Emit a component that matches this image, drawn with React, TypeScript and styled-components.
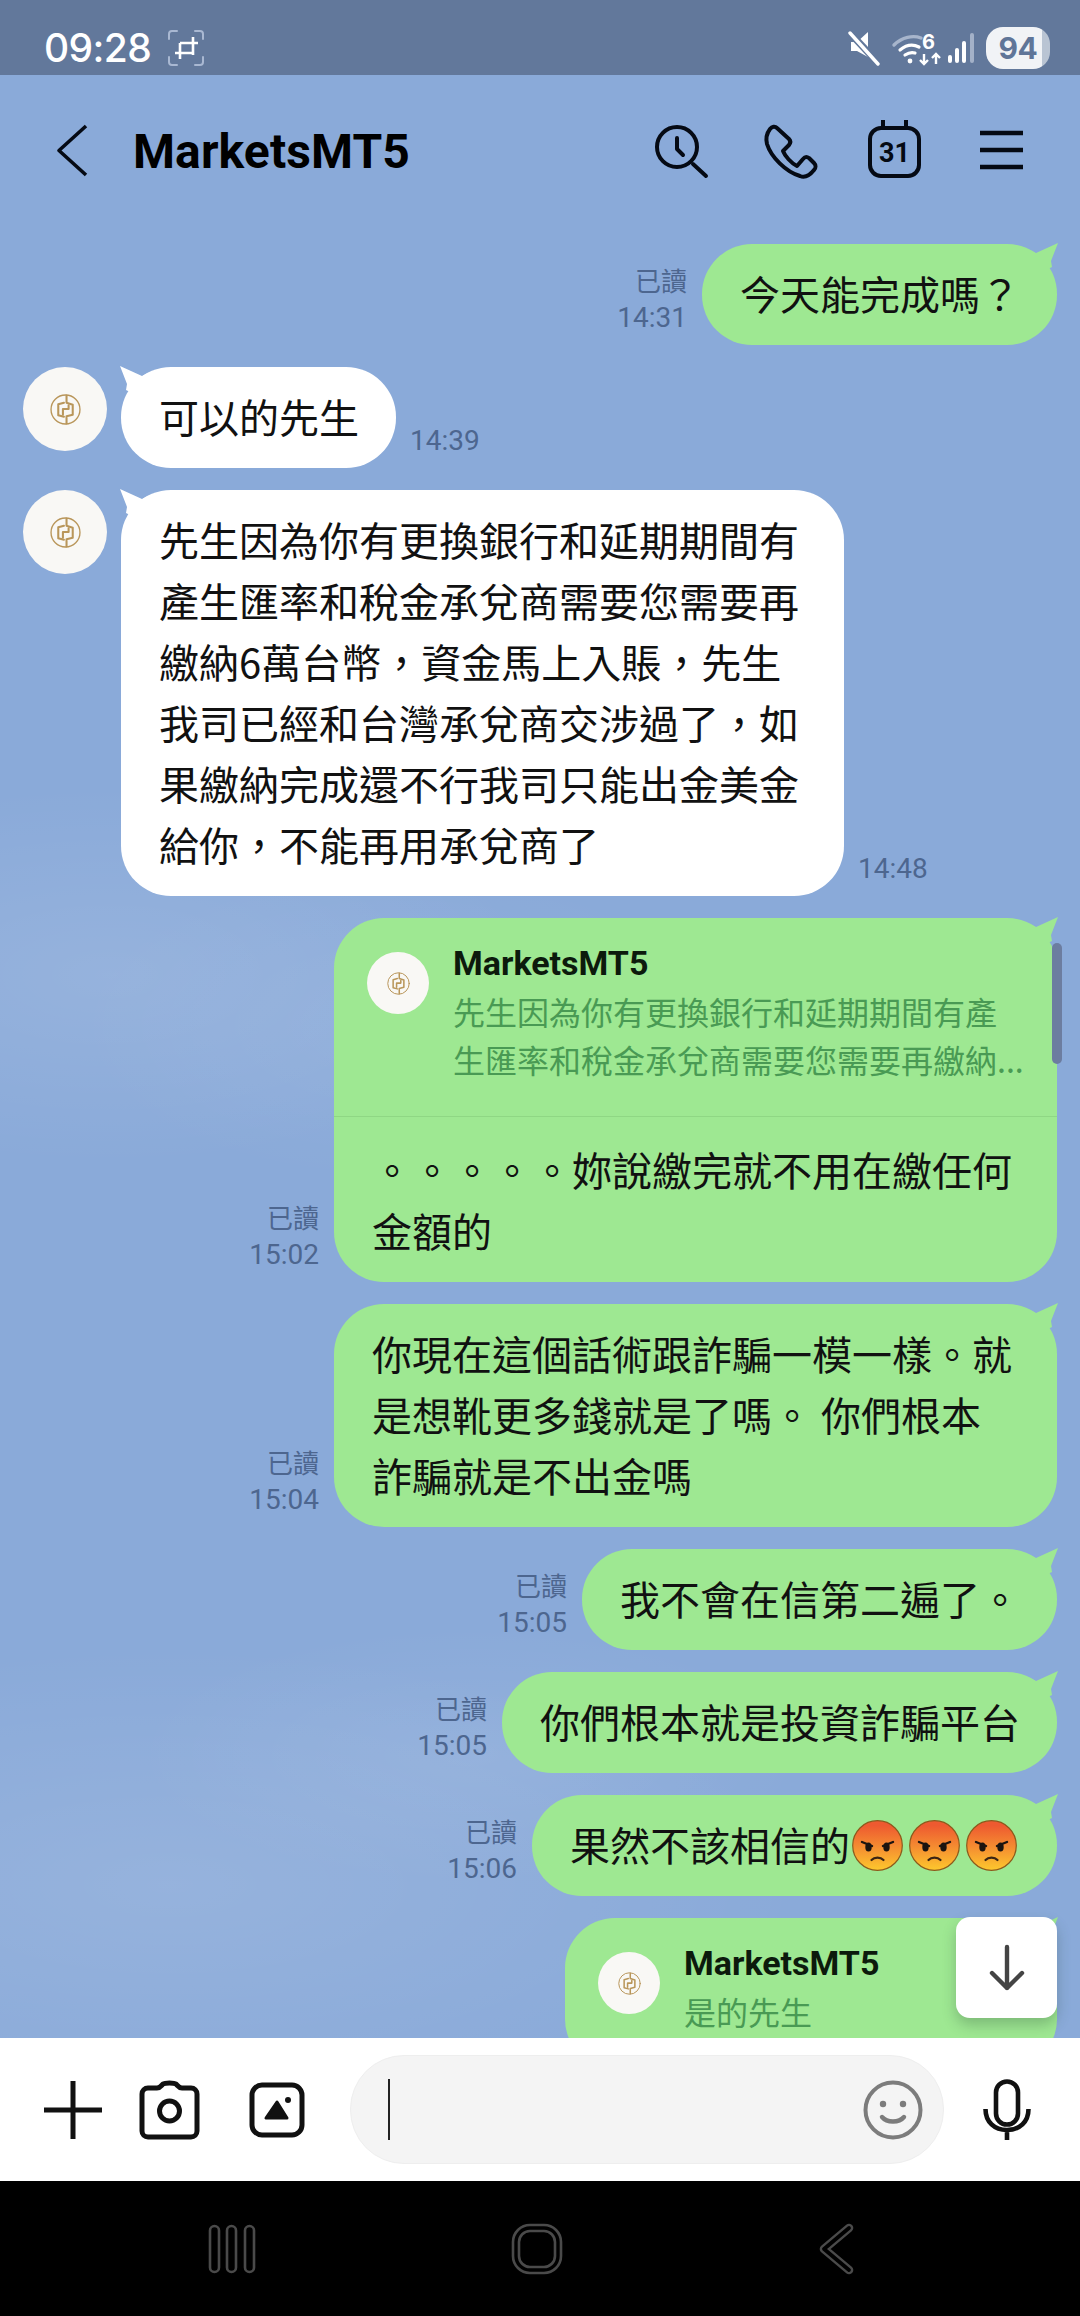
import React from "react";
import styled, { createGlobalStyle } from "styled-components";

const Global = createGlobalStyle`
  html, body { margin: 0; padding: 0; background: #000; }
  * { box-sizing: border-box; }
`;

const cjk = `"Noto Sans CJK TC", "Noto Sans CJK SC", "Noto Sans", sans-serif`;

const Screen = styled.div`
  width: 1080px;
  height: 2316px;
  display: flex;
  flex-direction: column;
  overflow: hidden;
  font-family: Roboto, ${cjk};
  color: #0f0f0f;
`;

const StatusBar = styled.div`
  height: 75px;
  flex: none;
  background: #62789b;
  display: flex;
  align-items: center;
  padding: 20px 30px 0 44px;
  color: #fff;
`;
const Clock = styled.span`
  font-family: Inter, Roboto, sans-serif;
  font-size: 39px;
  font-weight: 500;
  line-height: 1;
  letter-spacing: -0.6px;
`;
const CropMark = styled.svg`
  margin-left: 17px;
  flex: none;
`;
const StatusRight = styled.div`
  margin-left: auto;
  display: flex;
  align-items: center;
`;
const Battery = styled.div`
  width: 64px;
  height: 42px;
  margin-left: 11px;
  border-radius: 17px;
  background: linear-gradient(90deg, #f1f3f6 0 88%, #b9c4d3 88% 100%);
  color: #5f7598;
  font-family: Inter, Roboto, sans-serif;
  font-size: 30px;
  font-weight: 700;
  letter-spacing: -0.5px;
  display: flex;
  align-items: center;
  justify-content: center;
`;

const Main = styled.div`
  position: relative;
  flex: none;
  height: 1963px;
  overflow: hidden;
  display: flex;
  flex-direction: column;
  background-color: #8aaad9;
  background-image:
    radial-gradient(ellipse 430px 190px at 110px 900px, rgba(255,255,255,.10), rgba(255,255,255,0)),
    radial-gradient(ellipse 330px 160px at 400px 950px, rgba(255,255,255,.06), rgba(255,255,255,0)),
    radial-gradient(ellipse 640px 240px at 170px 1810px, rgba(255,255,255,.10), rgba(255,255,255,0)),
    radial-gradient(ellipse 340px 130px at 470px 1680px, rgba(255,255,255,.07), rgba(255,255,255,0));
`;

const Header = styled.header`
  height: 150px;
  flex: none;
  display: flex;
  align-items: center;
  padding: 0 46px 0 56px;
  color: #050a14;
`;
const Title = styled.h1`
  margin: 2px 0 0 45px;
  font-family: Roboto, sans-serif;
  font-size: 48px;
  font-weight: 700;
  letter-spacing: 0.1px;
  color: #000;
`;
const HeaderActions = styled.div`
  margin-left: auto;
  display: flex;
  gap: 43px;
`;
const Glyph = styled.svg`
  display: block;
  flex: none;
  fill: none;
  stroke: currentColor;
  stroke-linecap: round;
  stroke-linejoin: round;
`;
const CalendarDay = styled.text`
  font-family: Roboto, sans-serif;
  font-size: 27px;
  font-weight: 700;
  fill: #050a14;
  stroke: none;
  text-anchor: middle;
`;

const List = styled.div`
  display: flex;
  flex-direction: column;
  gap: 22px;
  padding: 19px 23px 0;
`;
const Row = styled.div<{ $out?: boolean }>`
  flex: none;
  display: flex;
  align-items: flex-end;
  justify-content: ${(p) => (p.$out ? "flex-end" : "flex-start")};
  gap: ${(p) => (p.$out ? 15 : 14)}px;
`;
const Meta = styled.div<{ $out?: boolean }>`
  display: flex;
  flex-direction: column;
  align-items: ${(p) => (p.$out ? "flex-end" : "flex-start")};
  padding-bottom: 9px;
  font-family: Roboto, sans-serif;
  font-size: 28px;
  line-height: 37px;
  color: #4d668f;
`;
const ReadLabel = styled.span`
  font-family: ${cjk};
  font-size: 26px;
  margin-bottom: 1px;
`;
const Avatar = styled.div<{ $size: number }>`
  width: ${(p) => p.$size}px;
  height: ${(p) => p.$size}px;
  flex: none;
  align-self: flex-start;
  border-radius: 50%;
  background: #f9f8f5;
  display: flex;
  align-items: center;
  justify-content: center;
`;
const Bubble = styled.div<{ $out?: boolean; $width?: number }>`
  position: relative;
  flex: none;
  width: ${(p) => (p.$width ? `${p.$width}px` : "auto")};
  border-radius: 50px;
  background: ${(p) => (p.$out ? "#9ee892" : "#ffffff")};
  &::before {
    content: "";
    position: absolute;
    top: -2px;
    ${(p) => (p.$out ? "right: -1px;" : "left: -1px;")}
    width: 36px;
    height: 40px;
    background: inherit;
    transform: ${(p) => (p.$out ? "none" : "scaleX(-1)")};
    clip-path: polygon(0 6px, 8px 8px, 14px 11px, 36px 1px, 29px 19px, 30px 25px, 0 40px);
  }
`;
const BubbleText = styled.div`
  position: relative;
  padding: 19px 37px 21px 38px;
  font-family: ${cjk};
  font-size: 40px;
  line-height: 61px;
  white-space: pre-line;
  color: #111;
`;
const ReplyText = styled(BubbleText)`
  padding-top: 22px;
`;
const Angry = styled.svg`
  display: inline-block;
  vertical-align: -10px;
  margin-left: 6px;
  &:first-of-type { margin-left: 2px; }
  &:last-of-type { margin-right: 3px; }
`;
const Reply = styled.div`
  position: relative;
  display: flex;
  gap: 24px;
  padding: 24px 24px 33px 33px;
  border-bottom: 1px solid #8fd784;
`;
const ReplyAvatar = styled(Avatar)`
  margin-top: 10px;
`;
const ReplyBody = styled.div`
  min-width: 0;
  display: flex;
  flex-direction: column;
`;
const ReplyName = styled.div`
  font-family: Roboto, sans-serif;
  font-size: 34px;
  font-weight: 700;
  line-height: 42px;
  height: 45px;
  color: #0c1a0c;
`;
const ReplyQuote = styled.div`
  font-family: ${cjk};
  font-size: 32px;
  line-height: 48px;
  white-space: pre-line;
  color: #499a54;
`;
const ScrollThumb = styled.div`
  position: absolute;
  top: 868px;
  right: 18px;
  width: 10px;
  height: 121px;
  border-radius: 5px;
  background: #6c7da0;
`;
const JumpDown = styled.button`
  position: absolute;
  top: 1842px;
  right: 23px;
  width: 101px;
  height: 101px;
  padding: 0;
  border: 0;
  border-radius: 14px;
  background: #fff;
  color: #444;
  box-shadow: 0 7px 14px rgba(40, 70, 50, 0.28);
  display: flex;
  align-items: center;
  justify-content: center;
`;

const InputBar = styled.div`
  height: 143px;
  flex: none;
  background: #fff;
  display: flex;
  align-items: center;
  padding-left: 43px;
  color: #111;
`;
const Plus = styled(Glyph)`
  margin-right: 36px;
`;
const Camera = styled(Glyph)`
  margin-right: 49px;
`;
const Gallery = styled(Glyph)`
  margin-right: 45px;
`;
const Field = styled.div`
  width: 594px;
  height: 109px;
  flex: none;
  border-radius: 54px;
  background: #f4f4f4;
  border: 1px solid #eeeeee;
  display: flex;
  align-items: center;
  justify-content: space-between;
  padding: 0 20px 0 37px;
  color: #7c7c7c;
`;
const Caret = styled.div`
  width: 2px;
  height: 61px;
  background: #222;
`;
const Mic = styled(Glyph)`
  margin-left: 39px;
`;

const NavBar = styled.nav`
  height: 135px;
  flex: none;
  background: #000;
  display: flex;
  align-items: center;
  gap: 255px;
  padding: 0 0 0 208px;
`;

const Logo = ({ size }: { size: number }) => (
  <Glyph width={size} height={size} viewBox="0 0 30 30" color="#b9965a" strokeLinejoin="miter" strokeLinecap="butt">
    <circle cx="15" cy="15" r="14" strokeWidth="1.3" />
    <path d="M16 1.500V8.500L22 10.500V20L16 21.500V28.500" strokeWidth="2" />
    <path d="M13.500 8.500L8 10V20.500L13.500 22" strokeWidth="2" />
    <path d="M12.500 20V14.500H18V11" strokeWidth="2" />
  </Glyph>
);

const AngryFace = ({ id }: { id: string }) => (
  <Angry width="51" height="51" viewBox="0 0 51 51">
    <defs>
      <linearGradient id={id} x1="0" y1="0" x2="0" y2="1">
        <stop offset="0.1" stopColor="#ee5a30" />
        <stop offset="0.55" stopColor="#f58f31" />
        <stop offset="1" stopColor="#fdc82d" />
      </linearGradient>
    </defs>
    <circle cx="25.5" cy="25.5" r="24.8" fill={`url(#${id})`} stroke="#8c5a1c" strokeWidth="1.2" />
    <ellipse cx="16.5" cy="27" rx="3.2" ry="4.6" fill="#1c1410" />
    <ellipse cx="34.5" cy="27" rx="3.2" ry="4.6" fill="#1c1410" />
    <path d="M10 22l10 4M41 22l-10 4" stroke="#1c1410" strokeWidth="2.4" strokeLinecap="round" fill="none" />
    <path d="M19.5 40c3-3.2 9-3.2 12 0" stroke="#3a2414" strokeWidth="2.2" strokeLinecap="round" fill="none" />
  </Angry>
);

const ReadMeta = ({ time }: { time: string }) => (
  <Meta $out>
    <ReadLabel>已讀</ReadLabel>
    <span>{time}</span>
  </Meta>
);

export default function App() {
  return (
    <Screen lang="zh-TW">
      <Global />
      <StatusBar>
        <Clock>09:28</Clock>
        <CropMark width="36" height="36" viewBox="0 0 36 36" fill="none">
          <path d="M1 9V4a3 3 0 0 1 3-3h5M27 1h5a3 3 0 0 1 3 3v5M35 27v5a3 3 0 0 1-3 3h-5M9 35H4a3 3 0 0 1-3-3v-5" stroke="#a9b8d2" strokeWidth="2" strokeLinecap="round" />
          <path d="M12 13H30M25 7V25M7 23H25M12 13V29" stroke="#fff" strokeWidth="2.600" />
        </CropMark>
        <StatusRight>
          <svg width="128" height="36" viewBox="-29 0 128 36" fill="none">
            <path d="M2 12h6l11-10v25l-11-6H2z" fill="#fff" />
            <path d="M2 4l28 30" stroke="#62789b" strokeWidth="7" />
            <path d="M1 3l28 31" stroke="#fff" strokeWidth="3.400" strokeLinecap="round" />
            <path d="M45 15c8-8 19-10 27-7" stroke="#a7b5cc" strokeWidth="3.400" strokeLinecap="round" />
            <path d="M51 20c6-5 13-6 19-3M56 25c3-2 7-3 10-2" stroke="#fff" strokeWidth="3.200" strokeLinecap="round" />
            <circle cx="61" cy="31" r="2.400" fill="#fff" />
            <text x="73" y="19" fontFamily="Inter, Roboto, sans-serif" fontSize="20" fontWeight="700" fill="#fff">6</text>
            <path d="M75 24v10M71 30l4 4 4-4" stroke="#fff" strokeWidth="2.400" />
            <path d="M87 34V24M83 28l4-4 4 4" stroke="#fff" strokeWidth="2.400" />
          </svg>
          <svg width="27" height="30" viewBox="0 0 27 30" fill="none" strokeWidth="4" strokeLinecap="round">
            <path d="M2 24v4M9 17v11M16 10v18" stroke="#fff" />
            <path d="M24 2v26" stroke="#a3b1c8" />
          </svg>
          <Battery>94</Battery>
        </StatusRight>
      </StatusBar>

      <Main>
        <Header>
          <Glyph width="32" height="56" viewBox="0 0 32 56" strokeWidth="3.600">
            <path d="M30 4L3 28.500 30 53" strokeLinecap="butt" />
          </Glyph>
          <Title>MarketsMT5</Title>
          <HeaderActions>
            <Glyph width="64" height="64" viewBox="0 0 64 64" strokeWidth="4">
              <circle cx="28" cy="29" r="20" />
              <path d="M44 46l13 12M28 20v11l6 6" />
            </Glyph>
            <Glyph width="64" height="64" viewBox="0 0 64 64" strokeWidth="4">
              <path d="M14 11C16 8.500 19 8 21 10L33 21C35 23 34.500 25 33 27L27 33C29 38 35 45 41 48L47 41C49 38.500 51 38.500 53 40L58 45C60 47 60 50 58 52C54 57 49 60 44 58C30 54 15 39 11 26C9.500 20 11 15 14 11Z" />
            </Glyph>
            <Glyph width="64" height="64" viewBox="0 0 64 64" strokeWidth="4">
              <rect x="7" y="10" width="49" height="48" rx="11" />
              <path d="M20 2v8M43 2v8" strokeLinecap="butt" />
              <CalendarDay x="31.5" y="44">31</CalendarDay>
            </Glyph>
            <Glyph width="64" height="64" viewBox="0 0 64 64" strokeWidth="4.600">
              <path d="M10 15h43M10 32h43M10 49h43" strokeLinecap="butt" />
            </Glyph>
          </HeaderActions>
        </Header>

        <List>
          <Row $out>
            <ReadMeta time="14:31" />
            <Bubble $out><BubbleText>今天能完成嗎？</BubbleText></Bubble>
          </Row>

          <Row>
            <Avatar $size={84}><Logo size={31} /></Avatar>
            <Bubble><BubbleText>可以的先生</BubbleText></Bubble>
            <Meta>14:39</Meta>
          </Row>

          <Row>
            <Avatar $size={84}><Logo size={31} /></Avatar>
            <Bubble $width={723}>
              <BubbleText>{`先生因為你有更換銀行和延期期間有
產生匯率和稅金承兌商需要您需要再
繳納6萬台幣，資金馬上入賬，先生
我司已經和台灣承兌商交涉過了，如
果繳納完成還不行我司只能出金美金
給你，不能再用承兌商了`}</BubbleText>
            </Bubble>
            <Meta>14:48</Meta>
          </Row>

          <Row $out>
            <ReadMeta time="15:02" />
            <Bubble $out $width={723}>
              <Reply>
                <ReplyAvatar $size={62}><Logo size={23} /></ReplyAvatar>
                <ReplyBody>
                  <ReplyName>MarketsMT5</ReplyName>
                  <ReplyQuote>{`先生因為你有更換銀行和延期期間有產
生匯率和稅金承兌商需要您需要再繳納...`}</ReplyQuote>
                </ReplyBody>
              </Reply>
              <ReplyText>{`。。。。。妳說繳完就不用在繳任何
金額的`}</ReplyText>
            </Bubble>
          </Row>

          <Row $out>
            <ReadMeta time="15:04" />
            <Bubble $out $width={723}>
              <BubbleText>{`你現在這個話術跟詐騙一模一樣。就
是想靴更多錢就是了嗎。 你們根本
詐騙就是不出金嗎`}</BubbleText>
            </Bubble>
          </Row>

          <Row $out>
            <ReadMeta time="15:05" />
            <Bubble $out><BubbleText>我不會在信第二遍了。</BubbleText></Bubble>
          </Row>

          <Row $out>
            <ReadMeta time="15:05" />
            <Bubble $out><BubbleText>你們根本就是投資詐騙平台</BubbleText></Bubble>
          </Row>

          <Row $out>
            <ReadMeta time="15:06" />
            <Bubble $out>
              <BubbleText>
                果然不該相信的
                <AngryFace id="angry-a" />
                <AngryFace id="angry-b" />
                <AngryFace id="angry-c" />
              </BubbleText>
            </Bubble>
          </Row>

          <Row $out>
            <Bubble $out $width={492}>
              <Reply>
                <ReplyAvatar $size={62}><Logo size={23} /></ReplyAvatar>
                <ReplyBody>
                  <ReplyName>MarketsMT5</ReplyName>
                  <ReplyQuote>是的先生</ReplyQuote>
                </ReplyBody>
              </Reply>
            </Bubble>
          </Row>
        </List>

        <ScrollThumb />
        <JumpDown aria-label="scroll to bottom">
          <Glyph width="40" height="48" viewBox="0 0 40 48" strokeWidth="4.400">
            <path d="M20 3v41M5 29l15 15 15-15" />
          </Glyph>
        </JumpDown>
      </Main>

      <InputBar>
        <Plus width="60" height="60" viewBox="0 0 60 60" strokeWidth="5">
          <path d="M30 1v58M1 30h58" strokeLinecap="butt" />
        </Plus>
        <Camera width="61" height="60" viewBox="0 0 61 60" strokeWidth="5">
          <path d="M9 8h9c3 0 4-2 6-4 2-1.500 11-1.500 13 0 2 2 3 4 6 4h9a6 6 0 0 1 6 6v37a6 6 0 0 1-6 6H9a6 6 0 0 1-6-6V14a6 6 0 0 1 6-6z" />
          <circle cx="30.5" cy="31" r="10" />
        </Camera>
        <Gallery width="56" height="56" viewBox="0 0 56 56" strokeWidth="5">
          <rect x="3" y="3" width="50" height="50" rx="10" />
          <path d="M28 20L17 36h21z" fill="currentColor" strokeWidth="3" />
          <circle cx="39" cy="18" r="3" fill="currentColor" stroke="none" />
        </Gallery>
        <Field>
          <Caret />
          <Glyph width="60" height="60" viewBox="0 0 60 60" strokeWidth="4">
            <circle cx="30" cy="30" r="27.5" />
            <circle cx="20" cy="24" r="3.200" fill="currentColor" stroke="none" />
            <circle cx="40" cy="24" r="3.200" fill="currentColor" stroke="none" />
            <path d="M19 37c5 6 17 6 22 0" strokeWidth="4.400" />
          </Glyph>
        </Field>
        <Mic width="48" height="62" viewBox="0 0 48 62" strokeWidth="4.600">
          <rect x="13" y="2.5" width="22" height="43" rx="11" />
          <path d="M2.500 30c0 13 9 21 21.500 21s21.500-8 21.500-21M24 51v10" strokeLinecap="butt" />
        </Mic>
      </InputBar>

      <NavBar>
        <Glyph width="48" height="50" viewBox="0 0 48 50" color="#4a4a4a" strokeWidth="2.600">
          <rect x="2" y="2" width="9" height="46" rx="4.5" />
          <rect x="19" y="2" width="9" height="46" rx="4.5" />
          <rect x="37" y="2" width="9" height="46" rx="4.5" />
        </Glyph>
        <Glyph width="52" height="52" viewBox="0 0 52 52" color="#4a4a4a" strokeWidth="2.600">
          <rect x="2" y="2" width="48" height="48" rx="17" />
          <rect x="8" y="8" width="36" height="36" rx="11" />
        </Glyph>
        <Glyph width="36" height="52" viewBox="0 0 36 52" strokeLinecap="round">
          <path d="M31 5L6 26l25 21" stroke="#4a4a4a" strokeWidth="8.600" />
          <path d="M31 5L6 26l25 21" stroke="#000" strokeWidth="3.800" />
        </Glyph>
      </NavBar>
    </Screen>
  );
}
